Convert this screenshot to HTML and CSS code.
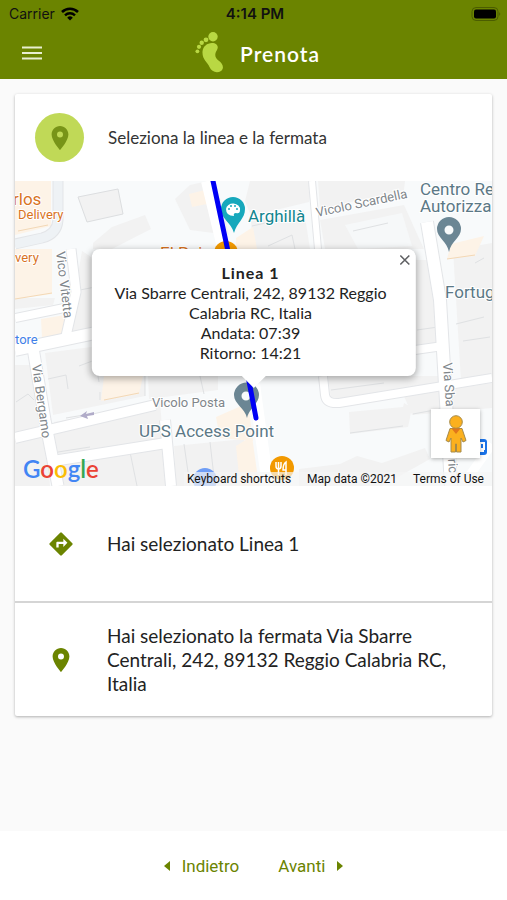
FILE: index.html
```html
<!DOCTYPE html>
<html lang="it">

<head>
  <meta charset="UTF-8">
  <meta name="viewport" content="width=device-width, initial-scale=1">
  <title>Prenota</title>
  <link rel="stylesheet" href="styles.css">
</head>

<body>
  <header class="header">
    <div class="status-bar">
      <div class="carrier">
        <span>Carrier</span>
        <svg width="18" height="14" viewBox="0 0 18 14">
          <path d="M1 5a11.500 11.500 0 0 1 16 0" fill="none" stroke="#000" stroke-width="2.600" />
          <path d="M4 8.300a7.300 7.300 0 0 1 10 0" fill="none" stroke="#000" stroke-width="2.400" />
          <path d="M9 13.500L6.200 10.700a4 4 0 0 1 5.600 0z" />
        </svg>
      </div>
      <span class="clock">4:14 PM</span>
      <svg class="battery" width="30" height="14" viewBox="0 0 30 14">
        <rect x="1" y="0.500" width="26" height="13" rx="4" fill="none" stroke="#4b5d00" />
        <rect x="3" y="2.500" width="22" height="9" rx="2" />
        <path d="M28.500 5v4q1.500-2 0-4z" fill="#3a4800" />
      </svg>
    </div>
    <div class="toolbar">
      <button class="menu-button" type="button" aria-label="Menu">
        <svg width="22" height="14" viewBox="0 0 22 14">
          <path d="M1 1.500h20M1 7h20M1 12.500h20" stroke="#e9efd0" stroke-width="2" />
        </svg>
      </button>
      <div class="brand">
        <svg width="29" height="42" viewBox="0 0 29 42" fill="#b9d843">
          <circle cx="18" cy="4.800" r="4.700" />
          <circle cx="11" cy="7.800" r="2.400" />
          <circle cx="6.700" cy="10.800" r="2.200" />
          <circle cx="4" cy="14.800" r="2.100" />
          <circle cx="2.400" cy="19.300" r="1.900" />
          <path d="M7.500 19.500C8 14.500 12 11 17 11C22 11 24 14.500 22 18C19.500 22 19.500 25.500 23.500 28.500C28 31.500 29.500 36.500 26 39C22 41.500 16.500 40 14.500 35C12.500 30 7 27.500 7.500 19.500z" />
        </svg>
        <h1>Prenota</h1>
      </div>
    </div>
  </header>

  <main class="content">
    <section class="card">
      <div class="card-header">
        <div class="avatar">
          <svg width="24" height="24" viewBox="5 2 14 20" fill="#789418">
            <path fill-rule="evenodd" d="M12 2C8.130 2 5 5.130 5 9c0 5.250 7 13 7 13s7-7.750 7-13c0-3.870-3.130-7-7-7zm0 9.500a2.500 2.500 0 1 1 0-5 2.500 2.500 0 0 1 0 5z" />
          </svg>
        </div>
        <p>Seleziona la linea e la fermata</p>
      </div>

      <div class="map">
        <svg class="map-canvas" viewBox="15 181 477 305" preserveAspectRatio="xMidYMid slice">
          <rect x="15" y="181" width="477" height="305" fill="#f8fafb" />
          <!-- blocks -->
          <g fill="#f2f2f2">
            <path d="M78 197L118 189L123 214L87 222z" stroke="#dcdee0" />
            <path d="M93 243L112 227L145 215L151 229L112 249H93z" />
            <path d="M175 199L190 185L208 181L221 200L229 235L190 230z" />
            <path d="M250 181H312L309 202L251 216L245 201z" />
            <path d="M318 181H405L404 190L320 209z" />
            <path d="M251 221L304 210L310 249H252z" />
            <path d="M320 220L404 205L418 236L424 249H325z" />
            <path d="M345 225L402 213L412 246L358 249z" fill="#f6f8f9" />
            <path d="M15 298H55L53 305L15 309z" />
            <path d="M82 251L100 263V330L70 333L75 292z" />
            <path d="M15 365H31L44 428L15 433z" />
            <path d="M45 353L145 340V396L53 415z" />
            <path d="M54 422L160 402L163 439L56 456z" />
            <path d="M57 462L164 446L166 486H62z" />
            <path d="M15 441L46 435L50 486H15z" />
            <path d="M174 446L244 439L251 486H176z" />
            <path d="M148 376H218V390L149 399z" />
            <path d="M415 260H432L438 342L415 346z" />
            <path d="M453 250L492 243V375L461 381z" />
            <path d="M328 376H440V392L331 401z" />
            <path d="M349 412L403 407L404 403L412 408L408 427L350 434z" />
            <path d="M404 396L492 383V408L412 415z" />
            <path d="M299 469L340 464L357 456L382 463L425 448L430 459L382 486H299z" />
          </g>
          <g fill="#fdf3e7">
            <path d="M15 181H51V226L15 235z" />
            <path d="M15 249H52V294L15 299z" />
            <path d="M41 319L65 315L62 335L42 338z" />
            <path d="M104 376H143L139 394L101 401z" />
            <path d="M189 194L217 187V202L192 207z" />
            <path d="M216 417L248 403L253 441L220 438z" />
            <path d="M451 244L484 236L475 256L447 259z" />
            <path d="M236 238L253 227L257 249H236z" />
            <path d="M236 446L252 436L259 486H240z" />
          </g>
          <g fill="none" stroke="#f3d8b6">
            <path d="M15 299L52 293M18 231L48 225M41 339L64 334M104 400L139 393M447 259L475 255" />
          </g>
          <!-- building outlines -->
          <g fill="none" stroke="#dfe1e3">
            <path d="M80 290L100 286M74 334L95 331M16 402L28 394L34 400M48 379L66 375L68 389M79 366L95 360L99 382M58 452L90 447M120 447L160 440M66 418L90 414M100 392V400M130 452L137 486M145 376V396M200 376L204 394M184 444L190 486M210 442L215 486" />
            <path d="M252 226L302 215M268 246L292 235L295 249M353 231L388 223M331 390L384 383M350 433L403 426M413 414L440 409M456 324L484 317M463 341L490 337M475 263L484 258M417 330L438 327" />
          </g>
          <!-- roads -->
          <g fill="none" stroke-linejoin="round">
            <g stroke="#e3e5e8">
              <path d="M15 318L74 306" stroke-width="10" />
              <path d="M15 350L105 331" stroke-width="14" />
              <path d="M58 181V220Q57 234 42 238L15 244" stroke-width="11" />
              <path d="M71 249L76 292L66 336" stroke-width="11" />
              <path d="M33 348L45 420L58 486" stroke-width="13" />
              <path d="M15 438L155 405" stroke-width="12" />
              <path d="M53 461L166 443M165 420L171 486" stroke-width="12" />
              <path d="M312 181L318 249" stroke-width="8" />
              <path d="M427 222L440 300L451 486" stroke-width="14" />
              <path d="M323 376L325 395Q326 404 339 403L492 378" stroke-width="10" />
              <path d="M415 350L443 346" stroke-width="10" />
            </g>
            <g stroke="#ffffff">
              <path d="M15 318L74 306" stroke-width="8" />
              <path d="M15 350L105 331" stroke-width="12" />
              <path d="M71 249L76 292L66 336" stroke-width="9" />
              <path d="M33 348L45 420L58 486" stroke-width="11" />
              <path d="M15 438L155 405" stroke-width="10" />
              <path d="M53 461L166 443M165 420L171 486" stroke-width="10" />
              <path d="M312 181L318 249" stroke-width="6" />
              <path d="M427 222L440 300L451 486" stroke-width="12" />
              <path d="M323 376L325 395Q326 404 339 403L492 378" stroke-width="8" />
              <path d="M415 350L443 346" stroke-width="8" />
              <path d="M207 181L226 260M254 384L268 486" stroke-width="12" />
              <path d="M462 486L492 444" stroke-width="9" />
            </g>
            <path d="M58 181V220Q57 234 42 238L15 244" stroke="#eef2f5" stroke-width="9" />
          </g>
          <path d="M80 416L87 411L86 414L94 412V415L87 416L88 419z" fill="#b1acc9" />
          <!-- street names -->
          <g class="street">
            <text transform="translate(317 217) rotate(-12)">Vicolo Scardella</text>
            <text transform="translate(56 252) rotate(83)">Vico Vitetta</text>
            <text transform="translate(32 365) rotate(82)">Via Bergamo</text>
            <text transform="translate(443 363) rotate(86)">Via Sba</text>
            <text transform="translate(448 459) rotate(86)">ric</text>
            <text x="152" y="407">Vicolo Posta</text>
          </g>
          <!-- places -->
          <g class="place">
            <text x="13" y="205" class="orange">rlos</text>
            <text x="18" y="219" class="orange small">Delivery</text>
            <text x="15" y="262" class="orange small">very</text>
            <text x="160" y="259" class="orange">El Poja</text>
            <text x="15" y="344" class="blue small">tore</text>
            <text x="248" y="222" class="teal">Arghillà</text>
            <text x="420" y="195">Centro Re</text>
            <text x="420" y="212">Autorizza</text>
            <text x="445" y="298">Fortug</text>
            <text x="139" y="437">UPS Access Point</text>
          </g>
          <!-- pins -->
          <path d="M234 233C231 222 221 219 221 209a12 12 0 0 1 24 0C245 219 237 222 234 233z" fill="#17a8bc" />
          <path d="M226 209a7 6 0 0 1 14 1q0 4-4 3q-3 0-2 3q-8 0-8-7z" fill="#fff" />
          <g fill="#17a8bc">
            <circle cx="229" cy="209" r="1" />
            <circle cx="231" cy="206" r="1" />
            <circle cx="235" cy="206" r="1" />
            <circle cx="237" cy="209" r="1" />
          </g>
          <g fill="#6b8694">
            <path fill-rule="evenodd" d="M449 252C447 241 437 238 437 229a12 12 0 0 1 24 0C461 238 451 241 449 252zM449 225.500a4.500 4.500 0 1 0 0 9a4.500 4.500 0 0 0 0-9z" />
            <path fill-rule="evenodd" d="M247 418C245 408 234 404 234 395a12.500 12.500 0 0 1 25 0C259 404 249 408 247 418zM246 391.500a4.500 4.500 0 1 0 0 9a4.500 4.500 0 0 0 0-9z" />
          </g>
          <circle cx="226" cy="253" r="12" fill="#f29900" />
          <circle cx="282" cy="468" r="12" fill="#f29900" />
          <path d="M276 462v4q0 3 2.500 3v6M278.500 462v7M281 462v4q0 3-2.500 3M286 475v-13q-3 2-3 8h3" fill="none" stroke="#fff" stroke-width="1.500" />
          <circle cx="205" cy="480" r="12" fill="#6f9df5" />
          <rect x="474" y="439" width="13" height="16" rx="3" fill="#1a73e8" />
          <path d="M480 443h4v6h-4zM480 451h4" fill="none" stroke="#fff" stroke-width="2" />
          <!-- bus line -->
          <path d="M213 181L232 270M248 376L256 418" fill="none" stroke="#0000f5" stroke-width="5" stroke-linecap="round" />
          <text x="23" y="478" class="google"><tspan fill="#4285f4">G</tspan><tspan fill="#ea4335">o</tspan><tspan fill="#fbbc05">o</tspan><tspan fill="#4285f4">g</tspan><tspan fill="#34a853">l</tspan><tspan fill="#ea4335">e</tspan></text>
        </svg>

        <div class="info-window">
          <button class="close-button" type="button" aria-label="Chiudi">
            <svg width="12" height="12" viewBox="0 0 12 12">
              <path d="M1.500 1.500l9 9M10.500 1.500l-9 9" stroke="#5f6063" stroke-width="1.600" />
            </svg>
          </button>
          <h2>Linea 1</h2>
          <p>Via Sbarre Centrali, 242, 89132 Reggio Calabria RC, Italia</p>
          <p>Andata: 07:39</p>
          <p>Ritorno: 14:21</p>
        </div>

        <button class="pegman" type="button" aria-label="Street View">
          <svg width="22" height="38" viewBox="0 0 22 38" fill="#fbb01e" stroke="#a58a4a">
            <path d="M5 13.500h12l4 12-3 1.500-2-4V37h-4.500v-8h-1v8H6V23l-2 4-3-1.500z" />
            <circle cx="11" cy="7" r="6.300" />
            <path d="M6.500 13.500h9L11 19z" fill="#e0761b" stroke="none" />
          </svg>
        </button>

        <div class="map-footer">
          <button type="button">Keyboard shortcuts</button>
          <span>Map data ©2021</span>
          <a href="#">Terms of Use</a>
        </div>
      </div>

      <div class="row">
        <svg width="28" height="28" viewBox="0 0 24 24" fill="#6b8400">
          <path d="M21.710 11.290l-9-9a1 1 0 0 0-1.410 0l-9 9a1 1 0 0 0 0 1.410l9 9a1 1 0 0 0 1.410 0l9-9a1 1 0 0 0 0-1.410zM14 14.500V12h-4v3H8v-4c0-.550.450-1 1-1h5V7.500l3.500 3.500z" />
        </svg>
        <p>Hai selezionato Linea 1</p>
      </div>
      <div class="row">
        <svg width="28" height="24" viewBox="5 2 14 20" fill="#6b8400">
          <path fill-rule="evenodd" d="M12 2C8.130 2 5 5.130 5 9c0 5.250 7 13 7 13s7-7.750 7-13c0-3.870-3.130-7-7-7zm0 9.500a2.500 2.500 0 1 1 0-5 2.500 2.500 0 0 1 0 5z" />
        </svg>
        <p>Hai selezionato la fermata Via Sbarre Centrali, 242, 89132 Reggio Calabria RC, Italia</p>
      </div>
    </section>
  </main>

  <footer class="footer">
    <button type="button">
      <svg width="6" height="10" viewBox="0 0 6 10"><path d="M6 0v10L0 5z" /></svg>
      Indietro
    </button>
    <button type="button">
      Avanti
      <svg width="6" height="10" viewBox="0 0 6 10"><path d="M0 0v10l6-5z" /></svg>
    </button>
  </footer>
</body>

</html>
```
FILE: styles.css
```css
* {
  box-sizing: border-box;
}

body {
  font-family: Lato, sans-serif;
  background-color: #fafafa;
  color: #222;
  margin: 0;
  min-height: 100vh;
  display: flex;
  flex-direction: column;
}

h1, h2, p {
  margin: 0;
}

svg {
  display: block;
  flex: none;
}

button {
  font: inherit;
  color: inherit;
  background: none;
  border: none;
  padding: 0;
  cursor: pointer;
}

/* header */
.header {
  background-color: #6b8400;
}

.status-bar {
  display: grid;
  grid-template-columns: 1fr auto 1fr;
  align-items: center;
  height: 27px;
  padding: 0 6px 0 9px;
  font-family: Inter, sans-serif;
  font-size: 14px;
  color: #111;
}

.carrier {
  display: flex;
  align-items: center;
  gap: 6px;
}

.clock {
  font-size: 15px;
  font-weight: 600;
}

.battery {
  justify-self: end;
}

.toolbar {
  display: grid;
  grid-template-columns: 1fr auto 1fr;
  align-items: center;
  height: 52px;
  padding: 0 8px 0 16px;
}

.menu-button {
  justify-self: start;
  padding: 5px;
}

.brand {
  display: flex;
  align-items: center;
  gap: 16px;
}

.brand h1 {
  font-size: 21px;
  font-weight: 600;
  letter-spacing: 1px;
  color: #fff;
}

/* card */
.content {
  flex: 1;
  padding: 15px;
}

.card {
  background-color: #fff;
  border-radius: 2px;
  box-shadow: 0 1px 3px rgba(0, 0, 0, 0.3);
}

.card-header {
  display: flex;
  align-items: center;
  gap: 24px;
  height: 87px;
  padding: 0 20px;
  font-size: 17px;
  color: #333;
}

.avatar {
  display: flex;
  align-items: center;
  justify-content: center;
  width: 49px;
  height: 49px;
  border-radius: 50%;
  background-color: #c0d957;
}

/* map */
.map {
  position: relative;
  height: 305px;
  overflow: hidden;
  font-family: Roboto, sans-serif;
}

.map-canvas {
  width: 100%;
  height: 100%;
}

.street {
  font-size: 13px;
  fill: #80868b;
}

.street text, .place text {
  stroke: #fff;
  stroke-width: 2px;
  paint-order: stroke;
}

.place {
  font-size: 17px;
  fill: #5b7886;
}

.place .small {
  font-size: 13px;
}

.orange {
  fill: #d9731f;
}

.blue {
  fill: #3f7fe8;
}

.teal {
  fill: #12858f;
}

.google {
  font-family: Lato, sans-serif;
  font-size: 24px;
  font-weight: 600;
}

.info-window {
  position: absolute;
  top: 68px;
  left: 50%;
  transform: translateX(-50%);
  width: 68%;
  padding: 14px 22px 13px 16px;
  border-radius: 8px;
  background-color: #fff;
  box-shadow: 0 2px 7px 1px rgba(0, 0, 0, 0.3);
  font-family: Lato, sans-serif;
  font-size: 16px;
  line-height: 20px;
  text-align: center;
}

.info-window::after {
  content: "";
  position: absolute;
  top: 100%;
  left: 50%;
  margin-left: -12px;
  border: 12px solid transparent;
  border-top-color: #fff;
  border-bottom: none;
}

.info-window h2 {
  font-size: 16px;
  letter-spacing: 1px;
}

.close-button {
  position: absolute;
  top: 0;
  right: 0;
  padding: 5px;
}

.pegman {
  position: absolute;
  right: 12px;
  bottom: 28px;
  display: flex;
  align-items: center;
  justify-content: center;
  width: 49px;
  height: 49px;
  background-color: #fff;
  box-shadow: 0 1px 4px rgba(0, 0, 0, 0.3);
}

.map-footer {
  position: absolute;
  right: 0;
  bottom: 0;
  display: flex;
  gap: 16px;
  padding: 0 8px 0 3px;
  background-color: rgba(245, 245, 245, 0.7);
  font-size: 12px;
  line-height: 14px;
  color: #111;
}

.map-footer a {
  color: inherit;
  text-decoration: none;
}

/* selected line and stop */
.row {
  display: flex;
  align-items: center;
  gap: 32px;
  min-height: 115px;
  padding: 20px 32px;
  font-size: 19px;
  line-height: 24px;
}

.row + .row {
  border-top: 2px solid #d5d5d5;
}

/* footer */
.footer {
  display: flex;
  justify-content: center;
  gap: 39px;
  height: 69px;
  background-color: #fff;
  font-family: Roboto, sans-serif;
  font-size: 17px;
  color: #6b8400;
}

.footer button {
  display: flex;
  align-items: center;
  gap: 12px;
}

.footer svg {
  fill: #6b8400;
}
```
